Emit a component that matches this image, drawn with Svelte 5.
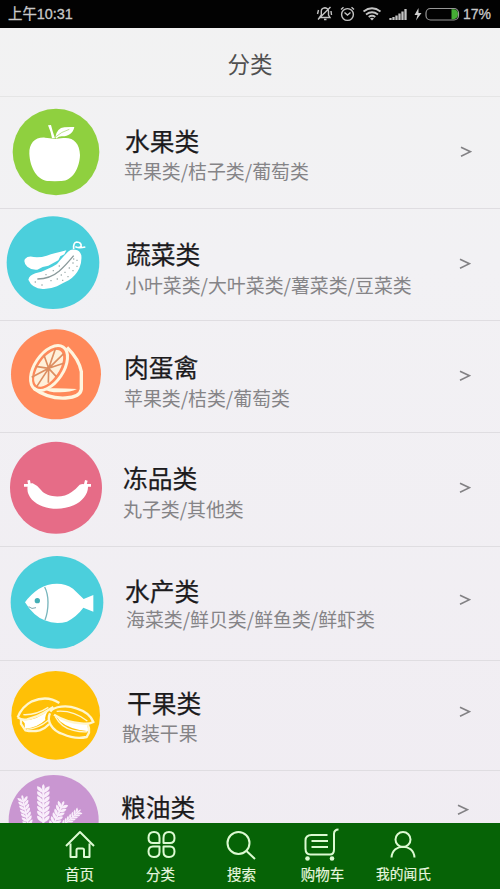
<script>
  // Category list; x, top and gap nudge the texts of each row
  const categories = [
    { icon: 'apple', name: '水果类', desc: '苹果类/桔子类/葡萄类', height: 112, x: 125, top: 28, descX: 124, gap: 4, arrowX: 460, arrowY: 55 },
    { icon: 'cucumber', name: '蔬菜类', desc: '小叶菜类/大叶菜类/薯菜类/豆菜类', height: 112, x: 126, top: 29, descX: 125, gap: 5, arrowX: 459, arrowY: 55 },
    { icon: 'lemon', name: '肉蛋禽', desc: '苹果类/桔类/葡萄类', height: 112, x: 124, top: 30, descX: 124, gap: 5, arrowX: 459, arrowY: 55 },
    { icon: 'sausage', name: '冻品类', desc: '丸子类/其他类', height: 114, x: 123, top: 29, descX: 123, gap: 5, arrowX: 459, arrowY: 55 },
    { icon: 'fish', name: '水产类', desc: '海菜类/鲜贝类/鲜鱼类/鲜虾类', height: 114, x: 125, top: 28, descX: 126, gap: 2, arrowX: 459, arrowY: 53 },
    { icon: 'nuts', name: '干果类', desc: '散装干果', height: 110, x: 127, top: 26, descX: 122, gap: 4, arrowX: 459, arrowY: 51 },
    { icon: 'grain', name: '粮油类', desc: '', height: 110, x: 121, top: 20, descX: 121, gap: 4, arrowX: 457, arrowY: 39 }
  ];

  const tabs = [
    { icon: 'home', label: '首页' },
    { icon: 'grid', label: '分类' },
    { icon: 'search', label: '搜索' },
    { icon: 'cart', label: '购物车' },
    { icon: 'user', label: '我的闻氏' }
  ];

  // Leaflets of one ear of grain, from the tip down
  const ear = [0, 1, 2, 3, 4, 5, 6];
</script>

{#snippet spike(x, y, angle, size)}
  <g transform="translate({x} {y}) rotate({angle}) scale({size})">
    <path d="M0 -6Q8 2 0 11Q-8 2 0 -6Z" />
    {#each ear as i}
      <path d="M-1 {15 + i * 14}Q-5 {3 + i * 14} -18 {1 + i * 14}Q-19 {15 + i * 14} -1 {20 + i * 14}Z" />
      <path d="M1 {15 + i * 14}Q5 {3 + i * 14} 18 {1 + i * 14}Q19 {15 + i * 14} 1 {20 + i * 14}Z" />
    {/each}
    <path d="M-3 5H3V120H-3Z" />
  </g>
{/snippet}

<div class="screen">
  <div class="status">
    <span class="time">上午10:31</span>
    <svg class="status-icons" width="146" height="28" viewBox="0 0 146 28" fill="none" stroke="#c4c4c4" stroke-width="1.4">
      <!-- muted bell -->
      <path d="M4.500 17.500H15L13.500 15V11Q13 8 10 7.700Q6.500 8 6.300 11V15ZM9 19.500H11.500M3 19.500L15.500 7M3.500 10L2.500 14M16 11L16.500 15" />
      <!-- alarm -->
      <circle cx="32.500" cy="14.500" r="5.900" />
      <path d="M29.500 12.500L32.500 15L35.500 12.500M26 9.500L28.500 7.300M39 9.500L36.500 7.300" />
      <!-- wifi -->
      <path d="M48.500 11.500Q57 5 65.500 11.500M51 14.500Q57 10 63 14.500M53.700 17Q57 14.500 60.300 17" stroke-width="1.800" />
      <path d="M55 18.500Q57 17 59 18.500L57 20.500Z" fill="#c4c4c4" stroke="none" />
      <!-- signal -->
      <path d="M75.500 20V18M78.500 20V17M81.500 20V15.500M84.500 20V13.500M87.500 20V11.500M90.500 20V9" stroke-width="2.300" />
      <!-- charging battery -->
      <path d="M103.500 8L99.500 15H102.500L101 20.500L106.500 13H103.500Z" fill="#d0d0d0" stroke="none" />
      <rect x="111" y="8.500" width="32.500" height="11.500" rx="4.500" stroke="#989898" stroke-width="1.200" />
      <path d="M136.500 9.300H139Q143 10 143 14Q143 18.500 139 19.200H136.500Z" fill="#45ad35" stroke="none" />
    </svg>
    <span class="battery">17%</span>
  </div>

  <header><h1>分类</h1></header>

  <main>
    {#each categories as c}
      <div class="row" style="--height: {c.height}px; --x: {c.x}px; --top: {c.top}px; --desc-x: {c.descX}px; --gap: {c.gap}px; --arrow-x: {c.arrowX}px; --arrow-y: {c.arrowY}px">
        <svg class="picture" width="110" height="111" viewBox="0 0 330 333">
          {#if c.icon === 'apple'}
            <g transform="translate(0 -6)" fill="#fff">
              <circle cx="168" cy="171" r="130" fill="#8fd03f" />
              <path d="M159 131Q151 129 135 128C105 126 87 145 88 176C90 218 112 258 148 258Q164 259 182 258C216 260 239 220 240 180C239 144 220 126 190 129Q174 130 166 132Z" />
              <path d="M144 91L153 90Q157 107 165 130L156 130Q153 111 144 91Z" />
              <path d="M166 127Q171 98 193 97Q208 95 223 96C219 116 203 125 185 124Q177 124 168 131Z" />
              <path d="M165 127Q184 110 208 103" fill="none" stroke="#9bd356" stroke-width="2" />
            </g>
          {:else if c.icon === 'cucumber'}
            <g transform="translate(0 -3)" fill="#fff">
              <circle cx="159" cy="164" r="139" fill="#4bcfdc" />
              <path d="M75 153Q84 143 101 147Q121 149 140 143Q164 136 199 127L193 139L181 145L175 157L160 165L145 173L128 177L112 185Q95 187 82 176Q69 163 75 153Z" />
              <path d="M85 215Q88 202 106 196L124 191L141 184L157 176L171 168L181 156L191 145L204 131Q213 122 226 125Q239 126 244 142Q246 163 238 181Q227 204 206 217L188 226L171 235Q150 244 128 243Q96 241 85 215Z" />
              <path d="M221 123Q219 104 230 102Q246 103 243 116Q234 121 226 116Q235 122 256 117" fill="none" stroke="#fff" stroke-width="5" />
              <path d="M112 213Q150 213 178 189Q198 171 221 143" fill="none" stroke="#8a9a9b" stroke-width="4" />
              <path d="M219 153h4M229 157h4M217 165h4M229 175h4M206 180h4M217 188h4M193 193h4M202 206h4M182 201h4M170 213h4M186 217h4M151 218h4M124 231h4M104 222h4M136 200h4M158 188h4M176 174h4" stroke="#a5b3b3" stroke-width="4" />
            </g>
          {:else if c.icon === 'lemon'}
            <g transform="translate(0 -3)" fill="none" stroke="#fff5df" stroke-width="9">
              <circle cx="168" cy="163" r="135" fill="#ff895a" stroke="none" />
              <ellipse cx="147" cy="144" rx="43" ry="76" transform="rotate(34 147 144)" />
              <path d="M201 82Q237 117 244 155V208Q240 232 197 234C162 236 128 225 101 205" stroke-width="10" />
              <path d="M130 206L144 205Q182 204 231 207Q211 217 181 217Q146 218 130 206Z" fill="#fff5df" stroke="none" />
              <ellipse cx="146" cy="145" rx="31" ry="63" transform="rotate(34 146 145)" fill="#fff0da" stroke="none" />
              <path d="M146 145L167 84M146 145L191 101M146 145L191 130M146 145L169 170M146 145L145 188M146 145L110 200M146 145L95 172M146 145L107 139M146 145L132 106" stroke="#dd8e61" stroke-width="5" />
            </g>
          {:else if c.icon === 'sausage'}
            <g transform="translate(0 6)" fill="#fff">
              <circle cx="168" cy="158" r="138" fill="#e66c87" />
              <path d="M83 154Q87 143 98 145Q112 151 123 165C139 187 188 192 215 171Q228 162 239 149Q253 143 264 154C265 177 247 199 221 211C178 230 124 222 96 194Q79 175 83 154Z" />
              <path d="M89 152L86 136M88 151L72 151M255 152L259 136M256 151L273 151" fill="none" stroke="#fff" stroke-width="8" />
            </g>
          {:else if c.icon === 'fish'}
            <g transform="translate(0 3)" fill="#fff">
              <circle cx="171" cy="163" r="139" fill="#4bcfdc" />
              <path d="M75 163Q90 141 116 123C148 103 191 101 219 122L251 153L280 141V191L250 179Q231 205 201 221Q165 230 134 217Q101 205 75 163Z" />
              <circle cx="112" cy="158" r="8" fill="#44afb6" />
              <path d="M134 117Q144 137 144 163Q144 193 135 216" fill="none" stroke="#79b6bd" stroke-width="4" />
              <path d="M86 176Q95 185 108 179" fill="none" stroke="#79a8b0" stroke-width="3" />
            </g>
          {:else if c.icon === 'nuts'}
            <g transform="translate(0 -3)" fill="none" stroke="#fff6cf" stroke-width="7">
              <circle cx="167" cy="166" r="133" fill="#ffc006" stroke="none" />
              <path d="M62 176L75 181Q111 180 147 150Q133 167 136 180Q113 203 75 206L74 190Z" fill="#fff" stroke="none" />
              <path d="M53 172Q66 140 96 124Q142 105 178 129M53 172Q65 181 81 178Q116 170 144 151L160 141M63 179V192L76 211Q97 216 119 211Q137 204 148 192" />
              <path d="M70 164Q107 166 145 142M80 208Q114 207 145 181" stroke-width="4" />
              <path d="M169 169Q203 190 262 191L265 214Q209 209 180 184Z" fill="#fff" stroke="none" />
              <path d="M151 155C162 138 202 135 229 145Q270 158 280 186Q264 194 244 190Q199 187 162 164M150 160C139 182 155 211 188 222Q226 239 260 231L267 218Q269 204 263 192" />
              <path d="M170 154Q219 150 262 183M166 170Q184 204 220 211Q245 217 262 215" stroke-width="4" />
            </g>
          {:else}
            <g transform="translate(0 -18)" fill="#f9eefb">
              <circle cx="161" cy="165" r="135" fill="#c996d1" />
              {@render spike(130, 63, 0, 1.05)}
              {@render spike(67, 95, -12, 0.85)}
              {@render spike(190, 113, 24, 0.9)}
              {@render spike(240, 136, 48, 0.65)}
            </g>
          {/if}
        </svg>
        <div class="texts">
          <h2>{c.name}</h2>
          {#if c.desc}<p>{c.desc}</p>{/if}
        </div>
        <svg class="arrow" width="12" height="12" viewBox="0 0 12 12"><path d="M1 1.300L10.500 5.700L1 10.200" /></svg>
      </div>
    {/each}
  </main>

  <nav>
    {#each tabs as tab}
      <div class="tab {tab.icon}">
        <svg width="38" height="36" viewBox="0 0 38 36">
          {#if tab.icon === 'home'}
            <path d="M5 18L19 4L33 18M9.500 15.500V29H15.500V22Q15.500 20.500 17 20.500H21.500Q23 20.500 23 22V29H28.500V15.500" />
          {:else if tab.icon === 'grid'}
            <path d="M17.500 15H11Q6.500 15 6.500 10Q6.500 4 12 4Q17.500 4 17.500 10ZM21.500 15H28Q32.500 15 32.500 10Q32.500 4 27 4Q21.500 4 21.500 10ZM17.500 18.500H11Q6.500 18.500 6.500 23.500Q6.500 29 12 29Q17.500 29 17.500 24ZM21.500 18.500H28Q32.500 18.500 32.500 23.500Q32.500 29 27 29Q21.500 29 21.500 24Z" />
          {:else if tab.icon === 'search'}
            <circle cx="15.500" cy="15" r="11" />
            <path d="M23.500 23L32 31" />
          {:else if tab.icon === 'cart'}
            <path d="M23.500 7H7.500Q1.500 7 1.500 12.500V20.500Q1.500 26.500 6.500 26.500H26Q30 26.500 30 21.500V6Q30 1.500 34.500 1.500M7.500 13H24M7.500 19H24" />
            <circle class="dot" cx="3.500" cy="30.500" r="2.300" />
            <circle class="dot" cx="28" cy="30.500" r="2.300" />
          {:else}
            <circle cx="18" cy="11.500" r="7.500" />
            <path d="M6.500 29.500C7.500 15 28.500 15 29.500 29.500" />
          {/if}
        </svg>
        <span>{tab.label}</span>
      </div>
    {/each}
  </nav>
</div>

<style>
  :global(body) {
    margin: 0;
    font-family: "Noto Sans CJK SC", "Noto Sans", sans-serif;
  }

  .screen {
    width: 500px;
    height: 889px;
    display: flex;
    flex-direction: column;
    overflow: hidden;
    background: linear-gradient(#f2f2f2, #f2f1f4 30%, #f0ecf2);
  }

  .status {
    height: 28px;
    flex: none;
    display: flex;
    align-items: center;
    background: #020202;
    color: #c9c9c9;
    font-family: "Liberation Sans", "Noto Sans CJK SC", sans-serif;
    font-size: 14px;
    line-height: 28px;
  }

  .time {
    width: 315px;
    padding-left: 8px;
    box-sizing: border-box;
    font-size: 14.4px;
    -webkit-text-stroke: 0.3px #c9c9c9;
  }

  .battery {
    margin-left: 2px;
    font-size: 14px;
    -webkit-text-stroke: 0.3px #c9c9c9;
  }

  header {
    height: 69px;
    flex: none;
    box-sizing: border-box;
    border-bottom: 1px solid #e5e5e5;
  }

  h1 {
    margin: 0;
    padding-top: 20px;
    text-align: center;
    font-size: 22.5px;
    line-height: 30px;
    font-weight: 400;
    color: #505050;
  }

  main {
    flex: 1;
    min-height: 0;
    overflow: hidden;
  }

  .row {
    height: var(--height);
    box-sizing: border-box;
    display: flex;
    align-items: flex-start;
    border-bottom: 1px solid #dfdde1;
  }

  .picture {
    flex: none;
    overflow: visible;
  }

  .texts {
    width: calc(var(--arrow-x) - 110px);
    padding-top: var(--top);
    flex: none;
  }

  h2 {
    margin: 0 0 0 calc(var(--x) - 110px);
    font-size: 24.8px;
    line-height: 30px;
    font-weight: 400;
    color: #1c1b1d;
    -webkit-text-stroke: 0.25px #1c1b1d;
  }

  p {
    margin: var(--gap) 0 0 calc(var(--desc-x) - 110px);
    font-size: 18.9px;
    line-height: 24px;
    white-space: nowrap;
    color: #858487;
  }

  .arrow {
    margin-top: calc(var(--arrow-y) - 6px);
    fill: none;
    stroke: #828184;
    stroke-width: 1.6;
  }

  nav {
    height: 66px;
    flex: none;
    display: flex;
    padding-left: 39px;
    background: #066306;
    color: #e6f6df;
  }

  .tab {
    width: 81px;
    display: flex;
    flex-direction: column;
    align-items: center;
    padding-top: 5px;
    box-sizing: border-box;
  }

  .tab svg {
    flex: none;
    fill: none;
    stroke: #dcfad2;
    stroke-width: 2;
    stroke-linejoin: round;
    overflow: visible;
  }

  .tab .dot {
    fill: #dcfad2;
    stroke: none;
  }

  .tab span {
    font-size: 14.5px;
    line-height: 20px;
    white-space: nowrap;
    -webkit-text-stroke: 0.2px #e6f6df;
  }

  .tab.user span {
    font-size: 13.7px;
    line-height: 18px;
  }
</style>
